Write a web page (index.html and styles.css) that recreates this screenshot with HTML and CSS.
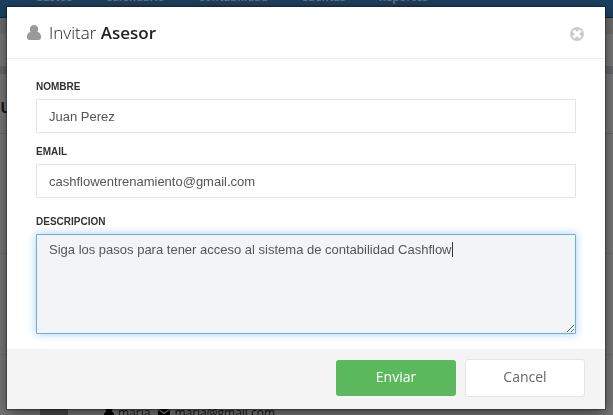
FILE: index.html
```
<!DOCTYPE html>
<html lang="es">
<head>
  <meta charset="UTF-8">
  <title>Invitar Asesor</title>
  <link rel="stylesheet" href="styles.css">
</head>
<body>
  <div class="page">
    <nav class="navbar">
      <a href="#">Gastos</a>
      <a href="#">Calendario</a>
      <a href="#">Contabilidad</a>
      <a href="#">Cuentas</a>
      <a href="#">Reportes</a>
    </nav>
    <div class="subnav"></div>
    <div class="toolbar"></div>
    <main class="content">
      <h2>u</h2>
      <div class="row"></div>
      <div class="row"></div>
      <div class="user">
        <span class="avatar"></span>
        <svg class="user-icon" viewBox="0 0 14 15"><path d="M7 0a4 4 0 0 1 3.500 6.800C13.200 7.300 14 9.500 14 12.300 14 14 13 15 11.500 15h-9C1 15 0 14 0 12.300 0 9.500.8 7.300 3.500 6.800A4 4 0 0 1 7 0z"/></svg>
        <span>maria</span>
        <svg class="mail-icon" viewBox="0 0 14 11"><path d="M0 1q0-1 1-1h12q1 0 1 1L7 6zM0 3l7 5 7-5v7q0 1-1 1H1q-1 0-1-1z"/></svg>
        <span>maria@gmail.com</span>
      </div>
    </main>
  </div>

  <div class="backdrop">
    <form class="modal" role="dialog" aria-labelledby="modal-title">
      <div class="modal-header">
        <svg class="title-icon" viewBox="0 0 14 15"><path d="M7 0a4.200 4.200 0 0 1 4.200 4.200c0 1.100-.3 2-.9 2.800C13.200 7.300 14 9.800 14 12.300c0 1.700-1 2.700-2.500 2.700h-9C1 15 0 14 0 12.300 0 9.800.8 7.300 3.700 7c-.6-.8-.9-1.700-.9-2.800A4.200 4.200 0 0 1 7 0z"/></svg>
        <h1 id="modal-title">Invitar <strong>Asesor</strong></h1>
        <button type="button" class="close" aria-label="Cerrar">
          <svg viewBox="0 0 14 14"><circle cx="7" cy="7" r="7"/><path d="M4.500 4.500l5 5m0-5l-5 5"/></svg>
        </button>
      </div>
      <div class="modal-body">
        <div class="form-group">
          <label for="nombre">NOMBRE</label>
          <input type="text" id="nombre" value="Juan Perez">
        </div>
        <div class="form-group">
          <label for="email">EMAIL</label>
          <input type="email" id="email" value="cashflowentrenamiento@gmail.com">
        </div>
        <div class="form-group description">
          <label for="descripcion">DESCRIPCION</label>
          <div class="editor">
            <textarea id="descripcion">Siga los pasos para tener acceso al sistema de contabilidad Cashflow</textarea>
            <span class="caret"></span>
          </div>
        </div>
      </div>
      <div class="modal-footer">
        <button type="submit" class="btn btn-success">Enviar</button>
        <button type="button" class="btn btn-default">Cancel</button>
      </div>
    </form>
  </div>

  <script>
    const descripcion = document.getElementById('descripcion');
    descripcion.focus();
    descripcion.setSelectionRange(descripcion.value.length, descripcion.value.length);
    descripcion.addEventListener('input', () => {
      document.querySelector('.caret').hidden = true;
      descripcion.style.caretColor = 'auto';
    });
  </script>
</body>
</html>
```

FILE: styles.css
```
* {
  box-sizing: border-box;
}
body {
  margin: 0;
  font-family: "Open Sans", sans-serif;
  font-size: 12px;
  color: #333;
  overflow: hidden;
}
.page {
  height: 100vh;
  overflow: hidden;
  background: #f2f2f2;
}
.navbar {
  display: flex;
  align-items: flex-end;
  gap: 33px;
  height: 18px;
  padding: 0 35px 10px;
  background: #367fbe;
  border-bottom: 1px solid #204c72;
  overflow: hidden;
}
.navbar a {
  color: #ddd;
  font-size: 11px;
  font-weight: 700;
  line-height: 20px;
  text-decoration: none;
}
.subnav {
  height: 16px;
  background: #dcdcdc;
}
.toolbar {
  height: 40px;
  border-bottom: 8px solid #cfd0d4;
}
.content {
  display: flex;
  flex-direction: column;
  height: calc(100% - 74px);
}
.content h2 {
  height: 60px;
  margin: 0;
  padding-top: 16px;
  border-bottom: 1px solid #d4d4d4;
  font-size: 20px;
  font-weight: 600;
  line-height: 32px;
}
.row {
  flex: 6;
  border-bottom: 1px solid #e0e0e0;
}
.row + .row {
  flex: 5;
}
.user {
  display: flex;
  align-items: center;
  gap: 4px;
  height: 60px;
  padding: 54px 0 0 40px;
}
.avatar {
  width: 28px;
  height: 20px;
  margin-right: 32px;
  background: #999;
}
.user-icon {
  width: 10px;
  height: 12px;
}
.mail-icon {
  width: 12px;
  height: 10px;
  margin-left: 4px;
}
.backdrop {
  position: fixed;
  inset: 0;
  padding: 7px 8px 6px 7px;
  background: rgba(0, 0, 0, 0.5);
}
.modal {
  background: #fff;
  box-shadow: 0 0 1px 1px rgba(0, 0, 0, 0.3), 0 5px 15px rgba(0, 0, 0, 0.5);
}
.modal-header {
  display: flex;
  align-items: center;
  height: 52px;
  padding: 0 21px 0 20px;
  border-bottom: 1px solid #eee;
}
.title-icon {
  width: 14px;
  height: 15px;
  margin-right: 8px;
  fill: #999;
}
.modal-header h1 {
  flex: 1;
  margin: 0;
  font-size: 17px;
  font-weight: 300;
  line-height: 24px;
  color: #222;
}
.modal-header strong {
  font-weight: 600;
}
.close {
  display: flex;
  margin: 3px 0 0;
  padding: 0;
  border: 0;
  background: none;
  cursor: pointer;
}
.close svg {
  width: 14px;
  height: 14px;
  fill: #ccc;
  stroke: #fff;
  stroke-width: 3;
  stroke-linecap: square;
}
.close circle {
  stroke: none;
}
.modal-body {
  padding: 20px 29px 15px;
}
.form-group {
  margin-bottom: 11px;
}
.form-group.description {
  margin: 16px 0 0;
}
label {
  display: block;
  padding-bottom: 4px;
  font-family: "Liberation Sans", Arial, sans-serif;
  font-size: 10px;
  font-weight: bold;
  line-height: 16px;
}
input, textarea {
  display: block;
  width: 100%;
  height: 34px;
  padding: 6px 12px;
  border: 1px solid #e2e5e7;
  border-radius: 1px;
  font-family: "Liberation Sans", Arial, sans-serif;
  font-size: 13px;
  line-height: 18px;
  color: #555;
  outline: none;
}
textarea {
  height: 100px;
  background: #f3f4f6;
  caret-color: transparent;
}
textarea:focus {
  border-color: #66afe9;
  box-shadow: 0 0 8px rgba(102, 175, 233, 0.6);
}
.editor {
  position: relative;
}
.caret {
  position: absolute;
  top: 8px;
  left: 416px;
  width: 1px;
  height: 15px;
  background: #333;
}
.modal-footer {
  display: flex;
  justify-content: flex-end;
  align-items: center;
  gap: 9px;
  height: 60px;
  padding: 0 20px 2px;
  background: #f4f4f4;
}
.btn {
  width: 120px;
  height: 36px;
  padding: 0 0 4px;
  border: 0;
  border-radius: 3px;
  font-family: "Open Sans", sans-serif;
  font-size: 14px;
  cursor: pointer;
}
.btn-success {
  background: #5cb85c;
  color: #fff;
}
.btn-default {
  height: 38px;
  border: 1px solid #e5e5e5;
  background: #fff;
  color: #666;
}
```
